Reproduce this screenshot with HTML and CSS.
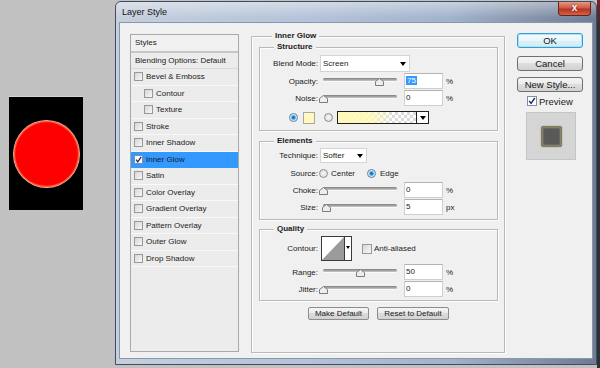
FILE: index.html
```html
<!DOCTYPE html>
<html>
<head>
    <title>Layer Style</title>
    <link rel="stylesheet" href="styles.css">
</head>
<body>
<div class="desktop">
    <div class="doc-area">
        <div class="doc"><div class="circle"></div></div>
    </div>

    <div class="window">
        <div class="titlebar">
            <span class="title">Layer Style</span>
            <span class="close">x</span>
        </div>

        <div class="client">
            <!-- left: list of styles -->
            <div class="styles-list">
                <div class="list-head">Styles</div>
                <div class="list-row blend">Blending Options: Default</div>
                <div class="list-row"><span class="cb"></span>Bevel &amp; Emboss</div>
                <div class="list-row sub"><span class="cb"></span>Contour</div>
                <div class="list-row sub"><span class="cb"></span>Texture</div>
                <div class="list-row"><span class="cb"></span>Stroke</div>
                <div class="list-row"><span class="cb"></span>Inner Shadow</div>
                <div class="list-row active"><span class="cb on"><svg viewBox="0 0 7 7" width="7" height="7"><path d="M1 3.6 L2.8 5.8 L6.2 0.8" fill="none" stroke="#1d2b6b" stroke-width="1.3"/></svg></span>Inner Glow</div>
                <div class="list-row"><span class="cb"></span>Satin</div>
                <div class="list-row"><span class="cb"></span>Color Overlay</div>
                <div class="list-row"><span class="cb"></span>Gradient Overlay</div>
                <div class="list-row"><span class="cb"></span>Pattern Overlay</div>
                <div class="list-row"><span class="cb"></span>Outer Glow</div>
                <div class="list-row"><span class="cb"></span>Drop Shadow</div>
            </div>

            <!-- middle: inner glow settings -->
            <div class="group outer">
                <div class="legend">Inner Glow</div>

                <div class="group structure">
                    <div class="legend">Structure</div>
                    <div class="row r-blend">
                        <span class="lbl">Blend Mode:</span>
                        <span class="select wide">Screen<i class="arrow"></i></span>
                    </div>
                    <div class="row r-field">
                        <span class="lbl">Opacity:</span>
                        <div class="slider"><div class="track"></div><span class="thumb" style="left: 75%"><svg viewBox="0 0 9 8" width="9" height="8"><polygon points="4.5,0.5 8.5,3.5 8.5,7.5 0.5,7.5 0.5,3.5" fill="#eeeeee" stroke="#7c7c7c"/></svg></span></div>
                        <span class="num"><span class="picked">75</span></span><span class="unit">%</span>
                    </div>
                    <div class="row r-field">
                        <span class="lbl">Noise:</span>
                        <div class="slider"><div class="track"></div><span class="thumb" style="left: 0%"><svg viewBox="0 0 9 8" width="9" height="8"><polygon points="4.5,0.5 8.5,3.5 8.5,7.5 0.5,7.5 0.5,3.5" fill="#eeeeee" stroke="#7c7c7c"/></svg></span></div>
                        <span class="num">0</span><span class="unit">%</span>
                    </div>
                    <div class="row r-color">
                        <span class="radio on"></span>
                        <span class="swatch"></span>
                        <span class="radio off"></span>
                        <span class="grad"><i class="grad-drop"><i class="arrow"></i></i></span>
                    </div>
                </div>

                <div class="group elements">
                    <div class="legend">Elements</div>
                    <div class="row r-tech">
                        <span class="lbl">Technique:</span>
                        <span class="select narrow">Softer<i class="arrow"></i></span>
                    </div>
                    <div class="row r-source">
                        <span class="lbl">Source:</span>
                        <span class="radio off src-a"></span><span class="opt">Center</span>
                        <span class="radio on src-b"></span><span class="opt opt-edge">Edge</span>
                    </div>
                    <div class="row r-field">
                        <span class="lbl">Choke:</span>
                        <div class="slider"><div class="track"></div><span class="thumb" style="left: 0%"><svg viewBox="0 0 9 8" width="9" height="8"><polygon points="4.5,0.5 8.5,3.5 8.5,7.5 0.5,7.5 0.5,3.5" fill="#eeeeee" stroke="#7c7c7c"/></svg></span></div>
                        <span class="num">0</span><span class="unit">%</span>
                    </div>
                    <div class="row r-field">
                        <span class="lbl">Size:</span>
                        <div class="slider"><div class="track"></div><span class="thumb" style="left: 4%"><svg viewBox="0 0 9 8" width="9" height="8"><polygon points="4.5,0.5 8.5,3.5 8.5,7.5 0.5,7.5 0.5,3.5" fill="#eeeeee" stroke="#7c7c7c"/></svg></span></div>
                        <span class="num">5</span><span class="unit">px</span>
                    </div>
                </div>

                <div class="group quality">
                    <div class="legend">Quality</div>
                    <div class="row r-contour">
                        <span class="lbl">Contour:</span>
                        <span class="contour">
                            <svg class="curve" viewBox="0 0 22 23" width="22" height="23" preserveAspectRatio="none"><polygon points="0,23 22,0 22,23" fill="#9b9b9b"/></svg>
                            <i class="contour-drop"><i class="arrow"></i></i>
                        </span>
                        <span class="check"></span><span class="opt">Anti-aliased</span>
                    </div>
                    <div class="row r-field r-range">
                        <span class="lbl">Range:</span>
                        <div class="slider"><div class="track"></div><span class="thumb" style="left: 50%"><svg viewBox="0 0 9 8" width="9" height="8"><polygon points="4.5,0.5 8.5,3.5 8.5,7.5 0.5,7.5 0.5,3.5" fill="#eeeeee" stroke="#7c7c7c"/></svg></span></div>
                        <span class="num">50</span><span class="unit">%</span>
                    </div>
                    <div class="row r-field">
                        <span class="lbl">Jitter:</span>
                        <div class="slider"><div class="track"></div><span class="thumb" style="left: 0%"><svg viewBox="0 0 9 8" width="9" height="8"><polygon points="4.5,0.5 8.5,3.5 8.5,7.5 0.5,7.5 0.5,3.5" fill="#eeeeee" stroke="#7c7c7c"/></svg></span></div>
                        <span class="num">0</span><span class="unit">%</span>
                    </div>
                </div>

                <div class="defaults">
                    <button class="mini-btn make">Make Default</button>
                    <button class="mini-btn reset">Reset to Default</button>
                </div>
            </div>

            <!-- right: dialog buttons -->
            <div class="side">
                <button class="btn ok">OK</button>
                <button class="btn cancel">Cancel</button>
                <button class="btn newstyle">New Style...</button>
                <div class="preview-check">
                    <span class="check on"><svg viewBox="0 0 8 8" width="8" height="8"><path d="M1.2 4 L3.1 6.4 L6.8 1" fill="none" stroke="#1d2b6b" stroke-width="1.4"/></svg></span>Preview
                </div>
                <div class="preview-box"><div class="preview-square"></div></div>
            </div>
        </div>
    </div>

    <div class="screen-edge"></div>
</div>
</body>
</html>
```

FILE: styles.css
```css
* { box-sizing: border-box; }
body { margin: 0; width: 600px; height: 368px; overflow: hidden; background: #c1c1c1; font-family: "Liberation Sans", Arial, sans-serif; font-size: 8px; color: #1b1b1b; }
.desktop { display: flex; height: 368px; }

/* document canvas on the left */
.doc-area { width: 115px; padding: 97px 0 0 9px; }
.doc { width: 74px; height: 113px; background: #000; padding: 23px 0 0 4px; box-shadow: 0 -1px 0 #d6d6d6; }
.circle { width: 67px; height: 68px; border-radius: 50%; background: #ff0000; border: 1px solid #f3a888; box-shadow: inset 0 0 1px 1px #ff6a48; }

/* window frame */
.window { width: 482px; height: 364px; margin-top: 1px; border: 1px solid #434c5a; border-radius: 6px 6px 0 0; background: linear-gradient(90deg, #c5cfdd, #b4c3d9 40%, #a1b2cb 70%, #6f7b92 100%); display: flex; flex-direction: column; }
.screen-edge { flex: 1; background: linear-gradient(#7c2222, #2c3039 30px); }
.titlebar { height: 20px; flex: none; display: flex; justify-content: space-between; padding-left: 6px; border-radius: 5px 5px 0 0; background: linear-gradient(rgba(255,255,255,.4), rgba(255,255,255,0) 80%); }
.title { font-size: 9px; line-height: 20px; color: #121212; }
.close { width: 33px; height: 14px; margin-right: 5px; border: 1px solid #6b2018; border-top: 0; border-radius: 0 0 4px 4px; background: linear-gradient(#e39a88, #cf5a44 45%, #b8321e 55%, #d0644a); color: #fff; font-weight: bold; font-size: 10px; line-height: 12px; text-align: center; text-shadow: 0 0 2px #5a1208; }

.client { flex: 1; margin: 0 3px 5px; background: #f0f0f0; border: 1px solid #8797af; display: grid; grid-template-columns: 109px 254px 66px; column-gap: 12px; align-items: start; padding: 11px 9px 0 10px; }

/* styles list */
.styles-list { height: 318px; border: 1px solid #a9a9a9; background: #ececec; }
.list-head { height: 18px; line-height: 16px; padding-left: 4px; background: #f1f1f1; border-bottom: 2px solid #c6c6c6; }
.list-row { height: 16.5px; display: flex; align-items: center; padding-left: 3px; border-bottom: 1px solid #f9f9f9; white-space: nowrap; }
.list-row.blend { height: 16px; padding-left: 4px; border-bottom-color: #d9d9d9; }
.list-row.sub { padding-left: 13px; }
.list-row.active { background: #3399ff; border-bottom-color: #3399ff; }
.cb { width: 9px; height: 9px; margin-right: 3px; flex: none; border: 1px solid #989898; background: linear-gradient(135deg, #d6d6d6, #f8f8f8); display: flex; align-items: center; justify-content: center; }
.cb.on { background: #fff; border-color: #7d8fa8; }

/* group boxes */
.group { border: 1px solid #b9b9b9; box-shadow: 1px 1px 0 #fdfdfd, inset 1px 1px 0 #fdfdfd; }
.legend { width: fit-content; height: 10px; line-height: 10px; margin: -6px 0 0 14px; padding: 0 3px; background: #f0f0f0; font-weight: bold; }
.outer { height: 317px; margin-top: 2px; padding: 0 6px 0 7px; }
.outer > .legend { margin-left: 13px; }
.structure { height: 84px; margin-top: 6px; }
.elements { height: 79px; margin-top: 10px; }
.quality { height: 72px; margin-top: 9px; }

.row { display: flex; align-items: center; white-space: nowrap; }
.lbl { width: 58px; flex: none; text-align: right; }
.r-blend { height: 17px; margin-top: 3px; }
.r-field { height: 16px; margin-top: 1px; }
.r-color { height: 13px; margin-top: 5px; }
.r-tech { height: 15px; margin-top: 2px; }
.r-source { height: 16px; margin-top: 2px; }
.r-contour { height: 25px; margin-top: 2px; }
.r-range { margin-top: 3px; }

.select { height: 100%; margin-left: 2px; padding-left: 2px; background: #fff; border: 1px solid #d4d4d4; display: flex; align-items: center; justify-content: space-between; }
.select.wide { width: 90px; }
.select.narrow { width: 47px; }
.arrow { width: 0; height: 0; border-left: 3.5px solid transparent; border-right: 3.5px solid transparent; border-top: 4px solid #000; }
.select .arrow { margin-right: 3px; }

.slider { position: relative; width: 74px; height: 16px; margin-left: 5px; flex: none; }
.track { margin-top: 5px; height: 3px; border-radius: 2px; background: linear-gradient(#7d7d7d, #c9c9c9); box-shadow: 0 1px 0 #fafafa; }
.thumb { position: absolute; top: 5px; width: 9px; height: 8px; margin-left: -4px; display: block; }
.thumb svg { display: block; }
.num { width: 39px; height: 16px; margin-left: 7px; padding-left: 1px; background: #fff; border: 1px solid #cfcfcf; border-top-color: #b3b3b3; line-height: 14px; flex: none; }
.picked { background: #3399ff; color: #fff; padding: 0 1px; }
.unit { margin-left: 3px; }

.radio { width: 9px; height: 9px; border-radius: 50%; flex: none; border: 1px solid #8f8f8f; background: radial-gradient(circle, #f8f8f8, #d5d5d5); }
.radio.on { border-color: #5f7f9e; background: radial-gradient(circle, #0b5aa0 0, #2f97da 1.6px, #9fd0f0 2.4px, #eef5fa 3.4px); }
.r-color .radio.on { margin-left: 29px; }
.swatch { width: 12px; height: 12px; margin-left: 5px; background: #fff9bd; border: 1px solid #a7a7a7; }
.r-color .radio.off { margin-left: 9px; }
.grad { width: 92px; height: 13px; margin-left: 4px; border: 1px solid #1e1e1e; display: flex; justify-content: flex-end; background: linear-gradient(90deg, #fffab8 0%, rgba(255,250,184,.85) 35%, rgba(255,250,184,0) 62%), linear-gradient(45deg, #dcdcdc 25%, transparent 25%, transparent 75%, #dcdcdc 75%), linear-gradient(45deg, #dcdcdc 25%, #fff 25%, #fff 75%, #dcdcdc 75%); background-size: 100% 100%, 6px 6px, 6px 6px; background-position: 0 0, 0 0, 3px 3px; }
.grad-drop { width: 12px; height: 100%; background: #fff; border-left: 1px solid #1e1e1e; display: flex; align-items: center; justify-content: center; }

.src-a { margin-left: 1px; }
.opt { margin-left: 3px; }
.src-b { margin-left: 12px; }
.opt-edge { margin-left: 4px; }

.contour { width: 31px; height: 25px; margin-left: 3px; border: 1px solid #3a3a3a; background: #fff; display: flex; }
.curve { display: block; }
.contour-drop { flex: 1; border-left: 1px solid #3a3a3a; display: flex; justify-content: center; padding-top: 9px; }
.contour-drop .arrow { border-left-width: 2.5px; border-right-width: 2.5px; border-top-width: 3px; }
.check { width: 10px; height: 10px; flex: none; border: 1px solid #989898; background: linear-gradient(135deg, #d6d6d6, #f8f8f8); display: flex; align-items: center; justify-content: center; }
.r-contour .check { margin-left: 10px; }
.r-contour .opt { margin-left: 2px; }

.defaults { display: flex; justify-content: center; gap: 8px; margin-top: 6px; }
.mini-btn { height: 13px; padding: 0; font-family: inherit; font-size: 8px; color: #1b1b1b; border: 1px solid #8d8d8d; border-radius: 2px; background: linear-gradient(#f5f5f5, #eaeaea 50%, #dcdcdc 50%, #d2d2d2); line-height: 11px; }
.mini-btn.make { width: 61px; }
.mini-btn.reset { width: 72px; }

/* right column */
.side { margin-top: -1px; display: flex; flex-direction: column; }
.btn { height: 15px; padding: 0; font-family: inherit; font-size: 9.5px; line-height: 13px; color: #151515; border: 1px solid #707070; border-radius: 3px; background: linear-gradient(#f4f4f4, #ececec 50%, #dedede 50%, #d1d1d1); }
.btn.ok { border-color: #3a9ad2; box-shadow: inset 0 0 0 1px #a9e6fa; background: linear-gradient(#f5fbfe, #e8f5fb 50%, #dcf0f9 50%, #d2ebf6); }
.btn.cancel { margin-top: 8px; }
.btn.newstyle { margin-top: 6px; }
.preview-check { height: 10px; margin: 4px 0 0 10px; display: flex; align-items: center; font-size: 9.5px; }
.preview-check .check { margin-right: 2px; background: #fff; border-color: #7d8fa8; }
.preview-box { width: 50px; height: 48px; margin: 6px 0 0 9px; background: #d5d5d5; border: 1px solid #c5c5c5; display: flex; align-items: center; justify-content: center; }
.preview-square { width: 21px; height: 21px; background: #595959; border: 1px solid #7b7a5c; border-radius: 2px; box-shadow: inset 0 0 2px 1px rgba(225,215,140,.45), 0 0 2px #a7a585; }
```
